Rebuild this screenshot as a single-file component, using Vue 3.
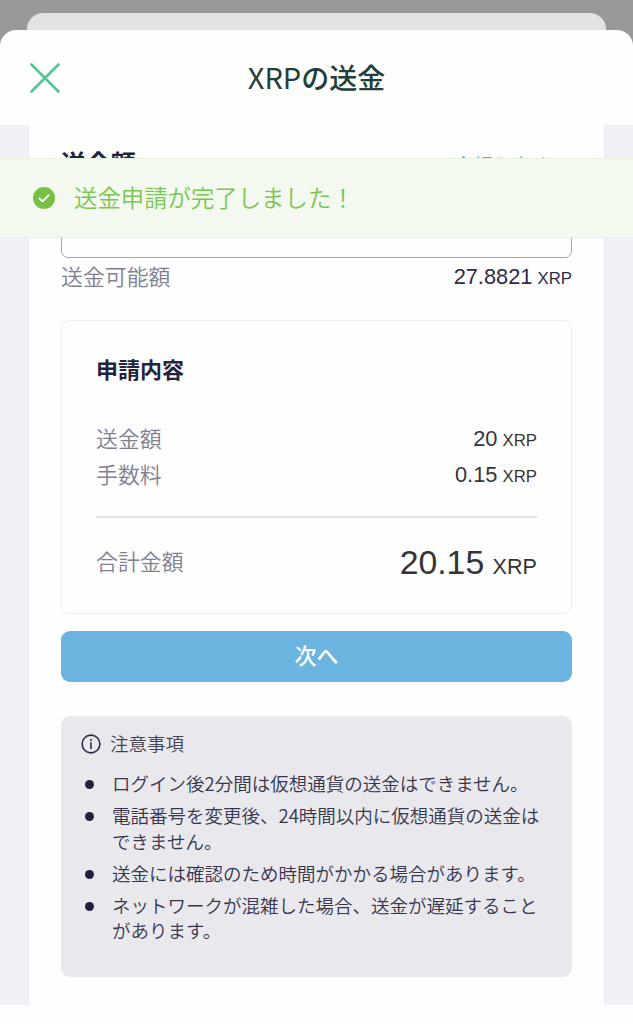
<template>
  <div class="screen">
    <div class="sheet-behind"></div>

    <div class="sheet">
      <header class="sheet-header">
        <button class="close" aria-label="閉じる">
          <svg viewBox="0 0 30 30" width="30" height="30">
            <path d="M1.5 1.5 28.5 28.5M28.5 1.5 1.5 28.5" />
          </svg>
        </button>
        <h1><span>XRP</span>の送金</h1>
      </header>

      <main class="content">
        <div class="card">
          <div class="amount-head">
            <h2>送金額</h2>
            <a class="all">全額入力する</a>
          </div>
          <div class="amount-input"></div>
          <div class="row available">
            <span class="label">送金可能額</span>
            <span class="value">27.8821 <small>XRP</small></span>
          </div>

          <section class="summary">
            <h3>申請内容</h3>
            <div v-for="item in detalles" :key="item.label" class="row">
              <span class="label">{{ item.label }}</span>
              <span class="value">{{ item.value }} <small>XRP</small></span>
            </div>
            <div class="row total">
              <span class="label">合計金額</span>
              <span class="value">20.15 <small>XRP</small></span>
            </div>
          </section>

          <button class="next">次へ</button>

          <section class="notes">
            <div class="notes-title">
              <svg viewBox="0 0 20 20" width="20" height="20">
                <circle cx="10" cy="10" r="8.9" />
                <path d="M10 8.2V15" />
                <path d="M10 5v1.9" />
              </svg>
              <span>注意事項</span>
            </div>
            <ul>
              <li v-for="nota in notas" :key="nota">{{ nota }}</li>
            </ul>
          </section>
        </div>
      </main>
    </div>

    <!-- Toast -->
    <div class="toast">
      <svg viewBox="0 0 22 22" width="22" height="22">
        <circle cx="11" cy="11" r="11" />
        <path d="M6.4 11.4 9.6 14.4 15.8 8.2" />
      </svg>
      <span>送金申請が完了しました！</span>
    </div>
  </div>
</template>

<script setup>
const detalles = [
  { label: '送金額', value: '20' },
  { label: '手数料', value: '0.15' }
];

const notas = [
  'ログイン後2分間は仮想通貨の送金はできません。',
  '電話番号を変更後、24時間以内に仮想通貨の送金はできません。',
  '送金には確認のため時間がかかる場合があります。',
  'ネットワークが混雑した場合、送金が遅延することがあります。'
];
</script>

<style>
body {
  margin: 0;
  background: #9b989b;
}
</style>

<style scoped>
.screen {
  position: relative;
  height: 1024px;
  overflow: hidden;
  background: #9b989b;
  font-family: "Noto Sans CJK JP", sans-serif;
  color: #24243f;
}

.screen::before {
  content: "";
  display: table;
}

.sheet-behind {
  height: 17px;
  margin: 13px 27px 0;
  background: #e2e2e4;
  border-radius: 16px 16px 0 0;
}

.sheet {
  height: 994px;
  background: #fefefe;
  border-radius: 16px 16px 0 0;
}

.sheet-header {
  display: grid;
  grid-template-columns: 60px 1fr 60px;
  align-items: center;
  height: 95px;
  padding: 0 30px;
  box-sizing: border-box;
}

.close {
  width: 30px;
  height: 30px;
  padding: 0;
  border: none;
  background: none;
}

.close svg {
  display: block;
  fill: none;
  stroke: #56c596;
  stroke-width: 2.6;
  stroke-linecap: round;
}

h1, h2, h3 { margin: 0; }

h1 {
  padding-bottom: 3px;
  font-size: 28px;
  font-weight: 500;
  line-height: 40px;
  text-align: center;
  color: #233f3a;
}

h1 span {
  font-size: 29px;
  font-weight: 400;
}

.content {
  height: 880px;
  padding: 0 28px;
  background: #f0f0f6;
}

.card {
  height: 880px;
  padding: 18px 32px 0;
  box-sizing: border-box;
  background: #fefefe;
  border: solid #eaeaf0;
  border-width: 0 1px;
}

.amount-head {
  display: flex;
  justify-content: space-between;
  align-items: center;
  height: 37px;
}

h2 {
  font-size: 25px;
  font-weight: 700;
}

.all {
  padding: 6px 1px 0 0;
  font-size: 19.6px;
  font-weight: 350;
  color: #5aaede;
}

.amount-input {
  height: 68px;
  margin-top: 10px;
  box-sizing: border-box;
  border: 1px solid #a5a5b8;
  border-radius: 7px;
}

.row {
  display: flex;
  justify-content: space-between;
  align-items: center;
  height: 36px;
}

.available { height: 38px; }

.label {
  padding-bottom: 4px;
  font-size: 21.9px;
  font-weight: 350;
  color: #808092;
}

.value {
  font-family: "Liberation Sans", Arial, sans-serif;
  font-size: 21.8px;
  word-spacing: -1px;
  color: #343438;
}

.value small {
  font-size: 16.8px;
}

.available .value { color: #2c2c48; }

.summary {
  height: 294px;
  margin-top: 24px;
  padding: 32px 34px 0;
  box-sizing: border-box;
  border: 1px solid #ededf5;
  border-radius: 9px;
}

h3 {
  margin-bottom: 38px;
  font-size: 22px;
  font-weight: 700;
  line-height: 30px;
}

.total {
  height: 90px;
  margin-top: 23px;
  border-top: 2px solid #e2e2e4;
}

.total .value {
  padding-bottom: 2px;
  font-size: 33.8px;
}

.total .label { padding-bottom: 5px; }

.total small {
  font-size: 21.6px;
}

.next {
  display: block;
  width: 100%;
  height: 51px;
  margin-top: 17px;
  padding: 0 0 5px;
  border: none;
  border-radius: 9px;
  background: #6cb4e0;
  color: #fff;
  font: 500 22px/46px "Noto Sans CJK JP", sans-serif;
}

.notes {
  height: 261px;
  margin-top: 34px;
  padding: 13px 20px 0;
  box-sizing: border-box;
  background: #e9e8ed;
  border-radius: 9px;
}

.notes-title {
  display: flex;
  align-items: center;
  gap: 9px;
  height: 30px;
  font-size: 18.5px;
  font-weight: 350;
  color: #45454f;
}

.notes-title span { padding-bottom: 2px; }

.notes-title svg {
  fill: none;
  stroke: #2c2c48;
  stroke-width: 1.6;
}

ul {
  margin: 12px 0 0;
  padding: 0;
  list-style: none;
}

li {
  display: flex;
  margin-bottom: 6.5px;
  font-size: 18.5px;
  font-weight: 350;
  line-height: 25.5px;
  color: #36364f;
}

li::before {
  content: "";
  flex: none;
  width: 9px;
  height: 9px;
  margin: 9px 18px 0 4px;
  border-radius: 50%;
  background: #20203c;
}

.toast {
  position: absolute;
  top: 158px;
  left: 0;
  right: 0;
  display: flex;
  align-items: center;
  gap: 19px;
  height: 80px;
  padding-left: 33px;
  box-sizing: border-box;
  background: #f3f9ee;
  border: solid #e6f2dc;
  border-width: 1px 0;
  font-size: 23.4px;
  font-weight: 350;
  color: #7ac653;
}

.toast span { padding-bottom: 3px; }

.toast circle { fill: #76c043; }

.toast path {
  fill: none;
  stroke: #fff;
  stroke-width: 1.8;
  stroke-linecap: round;
  stroke-linejoin: round;
}
</style>
